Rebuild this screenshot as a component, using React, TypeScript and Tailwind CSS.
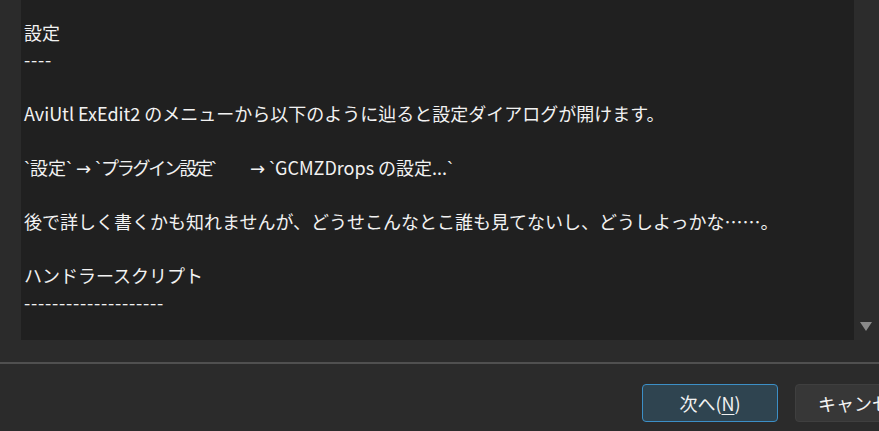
import React from "react";

const BT = () => <span style={{ fontFamily: '"Liberation Sans", sans-serif' }}>`</span>;

const Arrow = () => (
  <span className="inline-block w-[15px] text-center" style={{ fontFamily: '"DejaVu Sans", sans-serif' }}>
    →
  </span>
);

const Line = ({ children, dash }: { children?: React.ReactNode; dash?: boolean }) => (
  <div className={`h-[27px] leading-[27px] text-[18px] whitespace-pre ${dash ? "tracking-[0.75px]" : ""}`}>
    {children}
  </div>
);

export default function App() {
  return (
    <div
      className="w-[879px] h-[431px] bg-[#2b2b2b] flex flex-col overflow-hidden text-[#f2f2f2]"
      style={{ fontFamily: '"Noto Sans CJK JP", "Noto Sans", sans-serif' }}
    >
      <div className="flex h-[340px] shrink-0">
        <div className="w-[21px] shrink-0" />
        <div className="flex-1 bg-[#202020] overflow-hidden pl-[3px] pt-[19px]">
          <Line>設定</Line>
          <Line dash>----</Line>
          <Line />
          <Line>AviUtl ExEdit2 のメニューから以下のように辿ると設定ダイアログが開けます。</Line>
          <Line />
          <Line>
            <BT />設定<BT /> <Arrow /> <BT />
            <span className="tracking-[-2.3px]">プラグイン設定</span>
            <BT />
            <span className="inline-block w-[33px]" />
            <Arrow /> <BT />GCMZDrops の設定...<BT />
          </Line>
          <Line />
          <Line>後で詳しく書くかも知れませんが、どうせこんなとこ誰も見てないし、どうしよっかな……。</Line>
          <Line />
          <Line>ハンドラースクリプト</Line>
          <Line dash>--------------------</Line>
          <Line />
        </div>
        <div className="w-[25px] shrink-0 bg-[#2c2c2c] flex flex-col justify-end items-center pb-[9px]">
          <svg width="12" height="9" viewBox="0 0 12 9" className="ml-[-1px]">
            <polygon points="0,0 12,0 6,9" fill="#8a8a8a" />
          </svg>
        </div>
      </div>
      <div className="h-[22px] shrink-0" />
      <div className="h-[2px] bg-[#505050] shrink-0" />
      <div className="flex gap-[17px] pl-[642px] pt-[20px] shrink-0">
        <div className="w-[136px] h-[38px] shrink-0 rounded-[4px] border border-[#3c8fc6] bg-[#2f4450] flex items-center justify-center text-[18px]">
          <span>
            次へ(<span className="underline underline-offset-[3px]">N</span>)
          </span>
        </div>
        <div className="w-[136px] h-[38px] shrink-0 rounded-[4px] border border-[#3f3f3f] bg-[#373737] flex items-center justify-center text-[18px]">
          キャンセル
        </div>
      </div>
    </div>
  );
}
